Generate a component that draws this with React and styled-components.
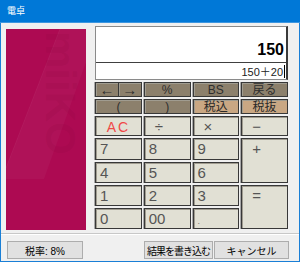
import React from "react";
import styled, { createGlobalStyle } from "styled-components";

const Global = createGlobalStyle`
  html, body {
    margin: 0;
    padding: 0;
    background: #f0f0f0;
  }
  * {
    box-sizing: border-box;
  }
`;

const ui = `"Liberation Sans", "Noto Sans CJK JP", sans-serif`;

function Watermark() {
  return (
    <svg width="80" height="201" viewBox="0 0 80 201">
      <polygon points="54,0 92,0 38,150 0,150 0,139" fill="#ffffff" opacity="0.035" />
      <line x1="54" y1="0" x2="0" y2="139" stroke="#ffffff" strokeOpacity="0.05" />
      <text
        x="2"
        y="-40"
        transform="rotate(90)"
        fontFamily="Liberation Sans, sans-serif"
        fontWeight="bold"
        fontSize="42"
        fill="#7a0035"
        fillOpacity="0.1"
      >
        miiKO
      </text>
    </svg>
  );
}

function App() {
  return (
    <>
      <Global />
      <Window>
        <TitleBar>電卓</TitleBar>
        <Client>
          <Main>
            <Panel>
              <Watermark />
            </Panel>
            <RightCol>
              <Display>
                <Result>150</Result>
                <Formula>
                  150＋20<Caret />
                </Formula>
              </Display>
              <Keypad>
                <SplitKey>
                  <Half>←</Half>
                  <Half>→</Half>
                </SplitKey>
                <Key tone="brown">%</Key>
                <Key tone="brown">BS</Key>
                <Key tone="brown">戻る</Key>

                <Key tone="brown">(</Key>
                <Key tone="brown">)</Key>
                <Key tone="tan">税込</Key>
                <Key tone="tan">税抜</Key>

                <Key tone="red">AC</Key>
                <Key tone="op">÷</Key>
                <Key tone="op">×</Key>
                <Key tone="op">−</Key>

                <Key tone="num">7</Key>
                <Key tone="num">8</Key>
                <Key tone="num">9</Key>
                <Key tone="op" span={2}>+</Key>

                <Key tone="num">4</Key>
                <Key tone="num">5</Key>
                <Key tone="num">6</Key>

                <Key tone="num">1</Key>
                <Key tone="num">2</Key>
                <Key tone="num">3</Key>
                <Key tone="op" span={2}>=</Key>

                <Key tone="num">0</Key>
                <Key tone="num">00</Key>
                <Key tone="dot">.</Key>
              </Keypad>
            </RightCol>
          </Main>
          <Separator />
          <Footer>
            <FooterButton width={76}>税率: 8%</FooterButton>
            <FooterRight>
              <FooterButton width={69} tight>結果を書き込む</FooterButton>
              <FooterButton width={75}>キャンセル</FooterButton>
            </FooterRight>
          </Footer>
        </Client>
      </Window>
    </>
  );
}

const Window = styled.div`
  width: 300px;
  height: 262px;
  display: flex;
  flex-direction: column;
  border: 1px solid #1a7fd6;
  border-top: none;
  background: #f0f0f0;
`;

const TitleBar = styled.div`
  height: 23px;
  margin: 0 -1px;
  background: #0078d7;
  border-bottom: 1px solid #3d96e0;
  color: #fff;
  font-family: ${ui};
  font-size: 9px;
  line-height: 22px;
  padding-left: 7px;
`;

const Client = styled.div`
  flex: 1;
  display: flex;
  flex-direction: column;
  padding: 3px 10px 0 5px;
`;

const Main = styled.div`
  display: flex;
  gap: 9px;
  align-items: flex-start;
`;

const Panel = styled.div`
  width: 80px;
  height: 201px;
  margin-top: 3px;
  background: #ad0a52;
  overflow: hidden;
  svg {
    display: block;
  }
`;

const RightCol = styled.div`
  width: 193px;
  display: flex;
  flex-direction: column;
`;

const Display = styled.div`
  height: 54px;
  background: #fff;
  border: 1px solid #8a8a8a;
  border-right: 2px solid #3a3a3a;
  display: flex;
  flex-direction: column;
`;

const Result = styled.div`
  height: 36px;
  border-bottom: 1px solid #404040;
  text-align: right;
  font-family: ${ui};
  font-weight: bold;
  font-size: 16px;
  line-height: 16px;
  padding: 15px 2px 0 0;
  color: #000;
`;

const Formula = styled.div`
  flex: 1;
  display: flex;
  justify-content: flex-end;
  align-items: center;
  font-family: ${ui};
  font-size: 11px;
  color: #222;
  padding-right: 1px;
`;

const Caret = styled.span`
  width: 1px;
  height: 13px;
  background: #000;
  margin-left: 1px;
`;

const Keypad = styled.div`
  margin-top: 2px;
  display: grid;
  grid-template-columns: repeat(4, 1fr);
  grid-template-rows: 15px 15px 20px 22px 21px 21px 21px;
  gap: 2px 2px;
`;

const tones = {
  brown: { bg: "#8c806c", color: "#2e2e2e", align: "center", size: "12px" },
  tan: { bg: "#c9a783", color: "#2a2a2a", align: "center", size: "12px" },
  red: { bg: "#e1e0d4", color: "#f04848", align: "center", size: "14px" },
  op: { bg: "#e1e0d4", color: "#555", align: "flex-start", size: "15px" },
  num: { bg: "#e1e0d4", color: "#555", align: "flex-start", size: "15px" },
  dot: { bg: "#e1e0d4", color: "#777", align: "flex-start", size: "9px" },
};

const Key = styled.div`
  grid-row: span ${(p) => p.span || 1};
  background: ${(p) => tones[p.tone].bg};
  color: ${(p) => tones[p.tone].color};
  border: 1px solid #383838;
  box-shadow: inset 1px 1px 0 #a09c90, -1px 0 0 #a8a8a8;
  font-family: ${ui};
  font-size: ${(p) => tones[p.tone].size};
  display: flex;
  justify-content: ${(p) => tones[p.tone].align};
  align-items: ${(p) => (p.tone === "brown" || p.tone === "tan" ? "center" : "flex-start")};
  line-height: 1;
  padding-left: ${(p) => (p.tone === "op" ? "10px" : p.tone === "num" || p.tone === "dot" ? "4px" : "0")};
  padding-top: ${(p) => (p.tone === "dot" ? "8px" : p.tone === "num" || p.tone === "op" ? "2px" : p.tone === "red" ? "3px" : "0")};
  letter-spacing: ${(p) => (p.tone === "red" ? "2px" : "0")};
`;

const SplitKey = styled.div`
  display: flex;
  border: 1px solid #383838;
  background: #383838;
  gap: 1px;
  box-shadow: -1px 0 0 #a8a8a8;
`;

const Half = styled.div`
  flex: 1;
  background: #8c806c;
  box-shadow: inset 1px 1px 0 #a09c90;
  color: #2e2e2e;
  font-family: ${ui};
  font-size: 15px;
  line-height: 1;
  display: flex;
  justify-content: center;
  align-items: center;
`;

const Separator = styled.div`
  margin: 3px -10px 0 -5px;
  border-top: 1px solid #c8c8c8;
  border-bottom: 1px solid #ffffff;
`;

const Footer = styled.div`
  display: flex;
  justify-content: space-between;
  padding: 6px 0 0 1px;
`;

const FooterRight = styled.div`
  display: flex;
  gap: 1px;
`;

const FooterButton = styled.div`
  width: ${(p) => p.width}px;
  height: 18px;
  background: #e1e1e1;
  border: 1px solid #adadad;
  font-family: ${ui};
  font-size: 10px;
  letter-spacing: ${(p) => (p.tight ? "-1px" : "0")};
  white-space: nowrap;
  color: #000;
  display: flex;
  align-items: center;
  justify-content: center;
`;

export default App;
